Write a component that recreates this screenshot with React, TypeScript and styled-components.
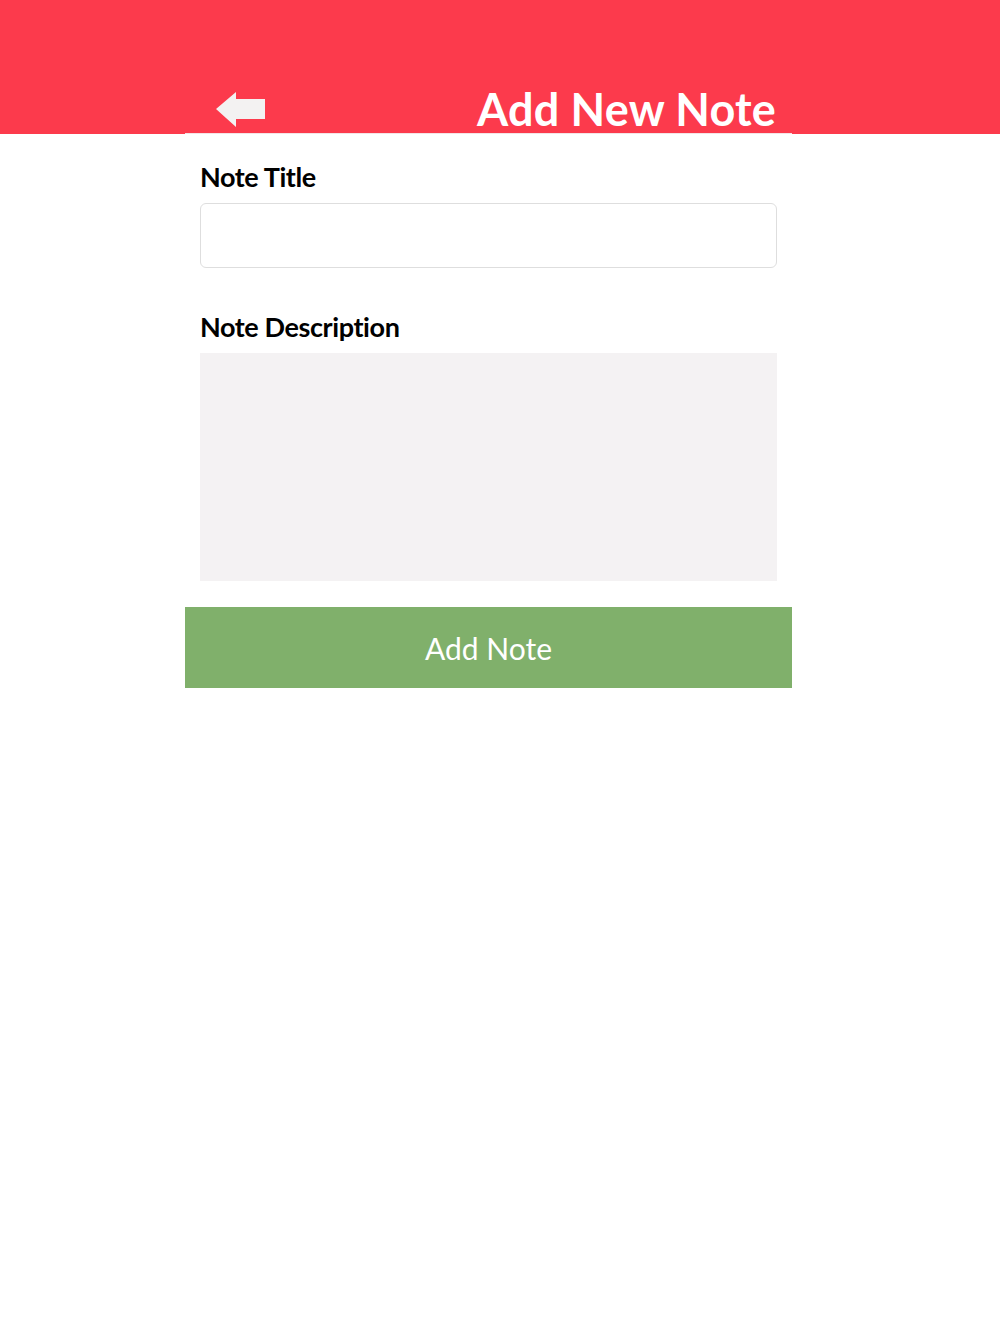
import styled, { createGlobalStyle } from "styled-components";

const GlobalStyle = createGlobalStyle`
    body {
        margin: 0;
        background: #ffffff;
        font-family: "Lato", "Liberation Sans", sans-serif;
    }
`

const BackArrow = () => (
    <svg width="50" height="36" viewBox="0 0 50 36">
        <polygon points="0,17 20,0 20,7 49,7 49,27 20,27 20,35" fill="#f3f2f2" />
    </svg>
)

export default function App() {
    return (
        <>
            <GlobalStyle />
            <Header>
                <HeaderInner>
                    <BackButton aria-label="back">
                        <BackArrow />
                    </BackButton>
                    <Title>Add New Note</Title>
                </HeaderInner>
            </Header>
            <Form>
                <Field>
                    <Label>Note Title</Label>
                    <TitleInput type="text" />
                </Field>
                <Field>
                    <Label>Note Description</Label>
                    <DescriptionInput />
                </Field>
                <SubmitButton>Add Note</SubmitButton>
            </Form>
        </>
    )
}

const Header = styled.header`
    background: #fc3a4c;
    height: 134px;
`

const HeaderInner = styled.div`
    width: 607px;
    height: 134px;
    margin-left: 185px;
    box-sizing: border-box;
    border-bottom: 1px solid #f3e4e6;
    display: flex;
    align-items: flex-end;
    justify-content: space-between;
    padding: 0 16px 1px 31px;
`

const BackButton = styled.button`
    background: none;
    border: none;
    padding: 0;
    margin-bottom: 4px;
    display: flex;
    cursor: pointer;
`

const Title = styled.h1`
    margin: 0;
    color: #ffffff;
    font-size: 45px;
    font-weight: 700;
    letter-spacing: 0.2px;
    line-height: 1;
`

const Form = styled.main`
    width: 607px;
    margin-left: 185px;
    display: flex;
    flex-direction: column;
`

const Field = styled.div`
    padding: 0 15px;
    display: flex;
    flex-direction: column;
`

const Label = styled.label`
    display: block;
    margin: 29px 0 13px;
    font-size: 27px;
    font-weight: 700;
    color: #000000;
    letter-spacing: -0.4px;
    line-height: 1;
`

const TitleInput = styled.input`
    box-sizing: border-box;
    width: 577px;
    height: 65px;
    border: 1px solid #dedede;
    border-radius: 6px;
    background: #ffffff;
    margin-bottom: 16px;
`

const DescriptionInput = styled.textarea`
    box-sizing: border-box;
    width: 577px;
    height: 228px;
    border: none;
    background: #f4f2f3;
    resize: none;
`

const SubmitButton = styled.button`
    margin-top: 26px;
    height: 81px;
    border: none;
    background: #80b06b;
    color: #ffffff;
    font-family: "Lato", "Liberation Sans", sans-serif;
    font-size: 30px;
    font-weight: 400;
    padding-top: 1px;
    cursor: pointer;
`
